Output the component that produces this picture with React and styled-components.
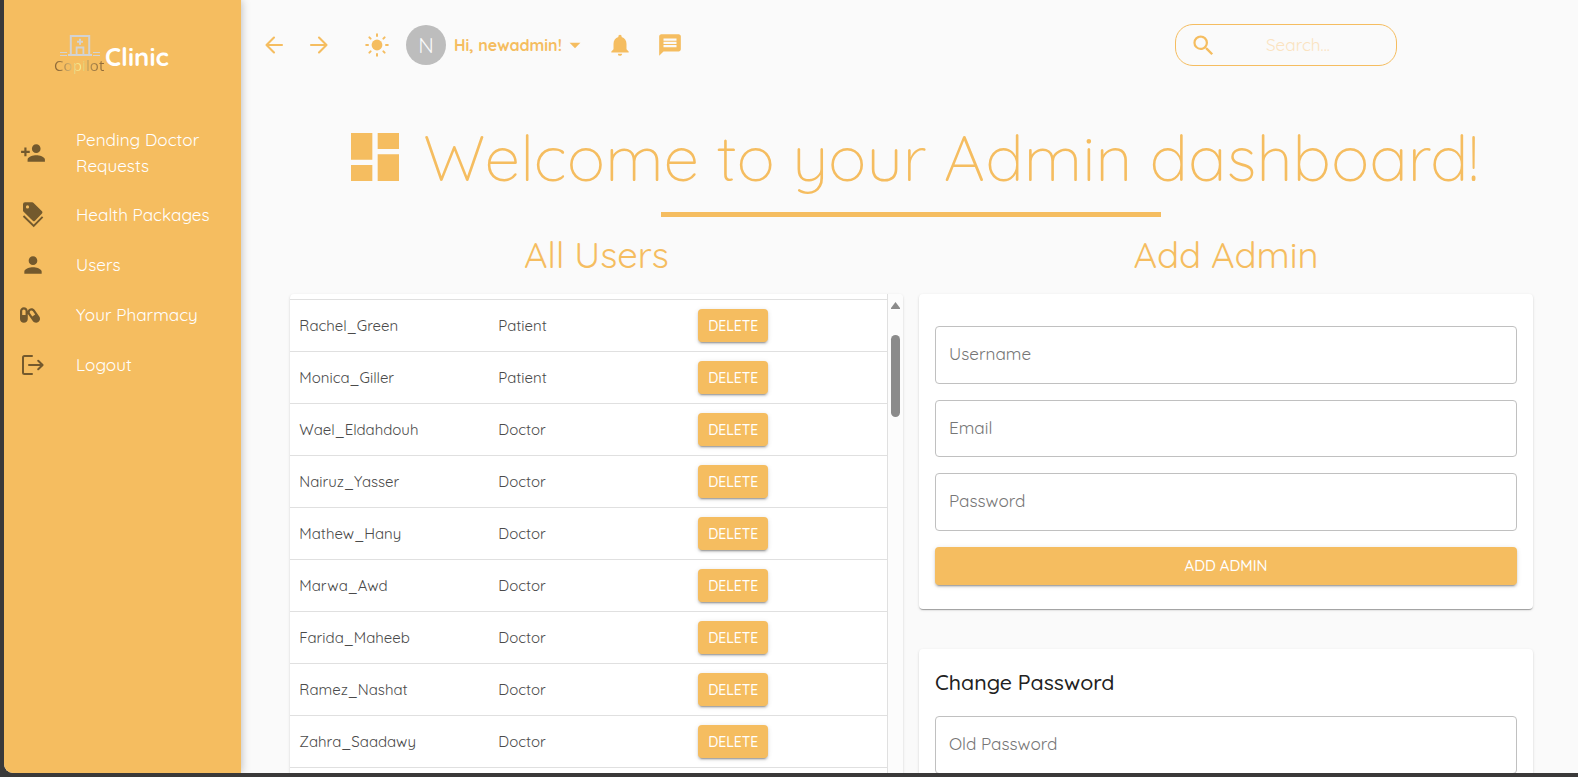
import React from 'react';
import styled, { createGlobalStyle } from 'styled-components';
import {
  MdPersonAdd,
  MdPerson,
  MdNotifications,
  MdMessage,
  MdSearch,
  MdDashboard,
  MdArrowDropDown,
} from 'react-icons/md';
import { FaCapsules } from 'react-icons/fa';

const orange = '#f5bd60';

const GlobalStyle = createGlobalStyle`
  * { box-sizing: border-box; }
  body {
    margin: 0;
    background: #3a3939;
    font-family: Quicksand, Lato, "Open Sans", sans-serif;
    color: rgba(0, 0, 0, 0.87);
  }
  button, input { font-family: inherit; }
  svg { display: block; flex: none; }
`;

const Text = styled.span`
  white-space: nowrap;
`;

const Frame = styled.div`
  height: 777px;
  padding: 0 0 4px 4px;
  overflow: hidden;
`;

const Shell = styled.div`
  height: 773px;
  display: flex;
  overflow: hidden;
  background: #fafafa;
  border-bottom-left-radius: 9px;
`;

const Sidebar = styled.aside`
  width: 237px;
  flex: none;
  background: ${orange};
  box-shadow: 0 0 9px rgba(0, 0, 0, 0.28);
  z-index: 1;
`;

const Brand = styled.div`
  display: flex;
  height: 116px;
  padding: 34px 0 0 51px;
`;

const BrandMark = styled.div`
  width: 50px;
`;

const BrandIcon = styled.svg`
  margin-left: 5px;
`;

const BrandCaption = styled.div`
  font: 400 15px/18px "Open Sans", sans-serif;
  letter-spacing: 0.13px;
  margin-left: -1px;
  margin-top: -1px;
  background: linear-gradient(90deg, #8f6a38 8%, #c4a365 28%, #f3e08a 44%, #f6ec8c 54%, #b08c50 70%, #8f6a38 96%);
  -webkit-background-clip: text;
  background-clip: text;
  color: transparent;
`;

const BrandName = styled.div`
  font-size: 25.7px;
  line-height: 30px;
  font-weight: 700;
  color: #fff;
  padding-top: 7px;
`;

const NavItem = styled.a`
  display: flex;
  align-items: center;
  height: ${(p) => (p.$tall ? 74 : 50)}px;
  padding-left: 16px;
  color: #fff;
  font-size: 17.14px;
  line-height: 26px;
`;

const NavIcon = styled.span`
  width: 56px;
  color: #73592d;
`;

const NavLabel = styled.span`
  display: flex;
  flex-direction: column;
`;

const Main = styled.main`
  flex: 1;
  min-width: 0;
`;

const TopBar = styled.header`
  height: 90px;
  display: flex;
  align-items: center;
  color: ${orange};
  padding-left: 20px;
`;

const IconButton = styled.span`
  width: 26px;
  margin-right: ${(p) => p.$gap || 0}px;
`;

const Avatar = styled.div`
  width: 40px;
  height: 40px;
  border-radius: 50%;
  background: #bdbdbd;
  color: #fafafa;
  font-size: 21.4px;
  display: grid;
  place-items: center;
  padding-bottom: 1px;
  margin-right: 8px;
`;

const Greeting = styled.div`
  width: 108px;
  font-size: 16px;
  font-weight: 700;
  line-height: 24px;
`;

const SearchBox = styled.div`
  width: 222px;
  height: 42px;
  margin-left: 492px;
  border: 1px solid ${orange};
  border-radius: 18px;
  display: flex;
  align-items: center;
  padding-left: 14px;
`;

const SearchHint = styled.span`
  margin-left: 49px;
  padding-bottom: 1px;
  font-size: 17.14px;
  font-weight: 400;
  color: #fbe3c0;
`;

const Title = styled.h1`
  margin: 30px 0 0;
  height: 74px;
  display: flex;
  align-items: center;
  padding-left: 102px;
  gap: 16px;
  color: ${orange};
  font-size: 64.27px;
  line-height: 74px;
  font-weight: 300;
`;

const Rule = styled.div`
  width: 500px;
  height: 5px;
  margin: 18px 0 0 420px;
  background: ${orange};
`;

const Columns = styled.div`
  display: grid;
  grid-template-columns: 613px 614px;
  gap: 16px;
  padding: 16px 0 0 49px;
`;

const Heading = styled.h2`
  margin: 0 0 17px;
  height: 44px;
  line-height: 44px;
  text-align: center;
  font-size: 36.4px;
  font-weight: 400;
  color: ${orange};
`;

const Card = styled.section`
  background: #fff;
  border-radius: 4px;
  box-shadow: 0 2px 1px -1px rgba(0, 0, 0, 0.2), 0 1px 1px rgba(0, 0, 0, 0.14),
    0 1px 3px rgba(0, 0, 0, 0.12);
`;

const TableCard = styled(Card)`
  height: 520px;
  display: flex;
  overflow: hidden;
`;

const Rows = styled.div`
  flex: 1;
  border-right: 1px solid #e0e0e0;
  padding-top: 5px;
`;

const Row = styled.div`
  height: 52px;
  display: grid;
  grid-template-columns: 199px 200px 1fr;
  align-items: center;
  padding-left: 9.3px;
  border-top: 1px solid #e0e0e0;
  font-size: 15px;
  color: #4a4a4a;
`;

const DeleteButton = styled.button`
  width: 70px;
  height: 33px;
  border: 0;
  padding: 0;
  border-radius: 4px;
  background: ${orange};
  color: #fff;
  font-size: 14px;
  font-weight: 500;
  box-shadow: 0 3px 1px -2px rgba(0, 0, 0, 0.2), 0 2px 2px rgba(0, 0, 0, 0.14),
    0 1px 5px rgba(0, 0, 0, 0.12);
`;

const ScrollTrack = styled.div`
  width: 15px;
  background: #fcfcfc;
  display: flex;
  flex-direction: column;
  align-items: center;
  padding: 8px 0 0 0;
  gap: 26px;
`;

const ScrollThumb = styled.div`
  width: 9px;
  height: 82px;
  border-radius: 5px;
  background: #8b8b8b;
`;

const FormCard = styled(Card)`
  padding: ${(p) => p.$top}px 16px 0;
  height: ${(p) => p.$height}px;
  margin-bottom: 40px;
`;

const Field = styled.div`
  height: 57.5px;
  margin-bottom: 16px;
  border: 1px solid #c0c0c0;
  border-radius: 4px;
  display: flex;
  align-items: center;
  padding: 0 0 2px 13px;
  font-size: 17.14px;
  color: #767676;
`;

const SubmitButton = styled(DeleteButton)`
  display: block;
  width: 100%;
  height: 38px;
  padding-bottom: 1px;
  font-size: 15px;
`;

const CardTitle = styled.h3`
  margin: 0 0 18px;
  font-size: 21.4px;
  line-height: 32px;
  font-weight: 500;
  color: #212121;
`;

const ArrowIcon = ({ flip }) => (
  <svg width="26" height="26" viewBox="0 0 26 26" fill="none" stroke="currentColor" strokeWidth="2.100" strokeLinecap="round" strokeLinejoin="round" transform={flip ? 'scale(-1 1)' : undefined}>
    <path d="M21 13H5.500M13 5.500 5.500 13l7.500 7.500" />
  </svg>
);

const SunIcon = () => (
  <svg width="26" height="26" viewBox="-13 -13 26 26" fill="currentColor" stroke="currentColor" strokeWidth="2" strokeLinecap="round">
    <circle r="5.400" stroke="none" />
    {[0, 45, 90, 135, 180, 225, 270, 315].map((a) => (
      <path key={a} d="M0-9v-1.800" transform={`rotate(${a})`} />
    ))}
  </svg>
);

const TagsIcon = () => (
  <svg width="26" height="26" viewBox="0 0 26 26" fill="currentColor">
    <path fillRule="evenodd" d="M5 .3h7.200q.8 0 1.400.6l8.400 8.400q1 1.100 0 2.200L15 18.700q-1.100 1-2.200 0L3.600 9.800Q3 9.200 3 8.400V2.300Q3 .3 5 .3zM7.500 3.300a1.600 1.600 0 1 0 0 3.200 1.600 1.600 0 0 0 0-3.200z" />
    <path d="M3.500 14 13.700 23.900 22.600 14.800" fill="none" stroke="currentColor" strokeWidth="1.900" />
  </svg>
);

const LogoutIcon = () => (
  <svg width="26" height="26" viewBox="0 0 26 26" fill="none" stroke="currentColor" strokeWidth="2" strokeLinecap="round" strokeLinejoin="round">
    <path d="M12 4H4.500Q3 4 3 5.500v15Q3 22 4.500 22H12M9 13h13.500M18.200 8.700l4.400 4.300-4.400 4.300" />
  </svg>
);

const ClinicIcon = () => (
  <BrandIcon width="40" height="23" viewBox="0 0 40 23" fill="none" stroke="#d2d3d4">
    <path d="M10.800 21V2h18.400v19" strokeWidth="2" />
    <path d="M8 21h24" strokeWidth="2" />
    <path d="M16.600 21v-7.500h6.800V21" strokeWidth="1.800" />
    <path d="M20 4.700v6M17 7.700h6" strokeWidth="2" />
    <path d="M0 18.500h7M0 21.500h7M33 18.500h7M33 21.500h7" strokeWidth="1.200" />
  </BrandIcon>
);

const navItems = [
  { icon: <MdPersonAdd size={26} />, tall: true, lines: ['Pending Doctor', 'Requests'] },
  { icon: <TagsIcon />, lines: ['Health Packages'] },
  { icon: <MdPerson size={26} />, lines: ['Users'] },
  { icon: <FaCapsules size={20} />, lines: ['Your Pharmacy'] },
  { icon: <LogoutIcon />, lines: ['Logout'] },
];

const users = [
  ['Rachel_Green', 'Patient'],
  ['Monica_Giller', 'Patient'],
  ['Wael_Eldahdouh', 'Doctor'],
  ['Nairuz_Yasser', 'Doctor'],
  ['Mathew_Hany', 'Doctor'],
  ['Marwa_Awd', 'Doctor'],
  ['Farida_Maheeb', 'Doctor'],
  ['Ramez_Nashat', 'Doctor'],
  ['Zahra_Saadawy', 'Doctor'],
];

export default function App() {
  return (
    <Frame>
      <GlobalStyle />
      <Shell>
        <Sidebar>
          <Brand>
            <BrandMark>
              <ClinicIcon />
              <BrandCaption>Copilot</BrandCaption>
            </BrandMark>
            <BrandName>Clinic</BrandName>
          </Brand>
          {navItems.map((item) => (
            <NavItem key={item.lines[0]} $tall={item.tall}>
              <NavIcon>{item.icon}</NavIcon>
              <NavLabel>
                {item.lines.map((text) => (
                  <Text key={text}>{text}</Text>
                ))}
              </NavLabel>
            </NavItem>
          ))}
        </Sidebar>
        <Main>
          <TopBar>
            <IconButton $gap={19}><ArrowIcon /></IconButton>
            <IconButton $gap={32}><ArrowIcon flip /></IconButton>
            <IconButton $gap={16}><SunIcon /></IconButton>
            <Avatar>N</Avatar>
            <Greeting><Text>Hi, newadmin!</Text></Greeting>
            <IconButton $gap={19}><MdArrowDropDown size={26} /></IconButton>
            <IconButton $gap={24}><MdNotifications size={26} /></IconButton>
            <IconButton><MdMessage size={26} /></IconButton>
            <SearchBox>
              <MdSearch size={27} />
              <SearchHint><Text>Search...</Text></SearchHint>
            </SearchBox>
          </TopBar>
          <Title>
            <MdDashboard size={64} />
            <Text>Welcome to your Admin dashboard!</Text>
          </Title>
          <Rule />
          <Columns>
            <div>
              <Heading>All Users</Heading>
              <TableCard>
                <Rows>
                  {users.map(([name, role]) => (
                    <Row key={name}>
                      <Text>{name}</Text>
                      <Text>{role}</Text>
                      <DeleteButton>DELETE</DeleteButton>
                    </Row>
                  ))}
                  <Row />
                </Rows>
                <ScrollTrack>
                  <svg width="9" height="7" viewBox="0 0 9 7" fill="#8b8b8b">
                    <path d="M4.500 0 9 6v1H0V6z" />
                  </svg>
                  <ScrollThumb />
                </ScrollTrack>
              </TableCard>
            </div>
            <div>
              <Heading>Add Admin</Heading>
              <FormCard $top={32} $height={315}>
                <Field><Text>Username</Text></Field>
                <Field><Text>Email</Text></Field>
                <Field><Text>Password</Text></Field>
                <SubmitButton>ADD ADMIN</SubmitButton>
              </FormCard>
              <FormCard $top={17} $height={300}>
                <CardTitle>Change Password</CardTitle>
                <Field><Text>Old Password</Text></Field>
              </FormCard>
            </div>
          </Columns>
        </Main>
      </Shell>
    </Frame>
  );
}
